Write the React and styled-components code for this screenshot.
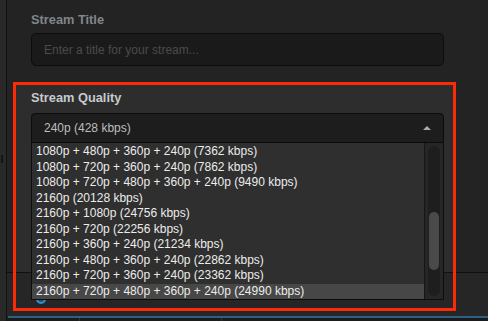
import React from "react";
import styled, { createGlobalStyle } from "styled-components";

const Global = createGlobalStyle`
  html, body { margin: 0; padding: 0; background: #232323; }
  body { font-family: "Liberation Sans", Arial, sans-serif; }
  * { box-sizing: border-box; }
`;

const Page = styled.div`
  position: relative;
  width: 488px;
  height: 321px;
  display: flex;
  background: #232323;
  overflow: hidden;
`;

const LeftStrip = styled.div`
  width: 7px;
  flex: none;
  background: #292929;
  border-right: 1px solid #121212;
  display: flex;
  flex-direction: column;
  padding-top: 155px;
`;

const Grip = styled.div`
  width: 2px;
  height: 8px;
  margin-left: 1px;
  background: #141414;
`;

const Main = styled.div`
  flex: 1;
  display: flex;
  flex-direction: column;
`;

const Upper = styled.div`
  height: 272px;
  display: flex;
  flex-direction: column;
`;

const Field = styled.div`
  display: flex;
  flex-direction: column;
  gap: ${(p) => p.$gap}px;
  padding: ${(p) => p.$pad};
`;

const Label = styled.div`
  font-size: 12.8px;
  line-height: 15px;
  font-weight: bold;
  color: ${(p) => (p.$active ? "#c6cacd" : "#80868b")};
`;

const TextInput = styled.input`
  height: 33px;
  width: 100%;
  background: #1a1a1a;
  border: 1px solid #0c0c0c;
  border-radius: 5px;
  padding: 0 12px;
  font-family: "Liberation Sans", Arial, sans-serif;
  font-size: 12px;
  color: #ccc;
  outline: none;
  &::placeholder { color: #4b4b4b; }
`;

const QualitySection = styled.div`
  flex: 1;
  margin: 19px 35px 0 9px;
  background: #2d2d2d;
  display: flex;
  flex-direction: column;
  gap: 8px;
  padding: 5px 9px 0 15px;
`;

const SelectWrap = styled.div`
  position: relative;
`;

const SelectHeader = styled.div`
  height: 30px;
  background: #1d1d1d;
  border: 1px solid #0b0b0b;
  border-radius: 4px 4px 0 0;
  display: flex;
  align-items: center;
  justify-content: space-between;
  padding: 0 12px 0 12px;
  font-size: 12px;
  color: #bdbdbd;
`;

const Arrow = styled.div`
  width: 0;
  height: 0;
  border-left: 4px solid transparent;
  border-right: 4px solid transparent;
  border-bottom: 4px solid #aaaaaa;
  margin-bottom: 1px;
`;

const Menu = styled.div`
  position: absolute;
  top: 30px;
  left: 0;
  right: 0;
  height: 157px;
  background: #2f2f2f;
  border: 1px solid #0d0d0d;
  border-top: none;
  display: flex;
  z-index: 2;
`;

const List = styled.div`
  flex: 1;
  display: flex;
  flex-direction: column;
  padding-top: 1px;
`;

const Item = styled.div`
  height: 15.55px;
  line-height: 15.55px;
  padding-left: 4px;
  font-size: 12px;
  color: #ececec;
  white-space: nowrap;
  background: ${(p) => (p.$selected ? "#474747" : "transparent")};
`;

const ScrollBar = styled.div`
  width: 19px;
  flex: none;
  background: #262626;
  border-left: 1px solid #161616;
  padding: 3px;
  display: flex;
`;

const Track = styled.div`
  flex: 1;
  background: #1e1e1e;
  border-radius: 6px;
  display: flex;
  flex-direction: column;
  padding: ${(p) => p.$top}px 1px 0 1px;
`;

const Thumb = styled.div`
  height: 58px;
  background: #4a4a4a;
  border-radius: 5px;
`;

const Lower = styled.div`
  flex: 1;
  background: #262626;
  border-top: 1px solid #111;
  padding: 21px 0 0 29px;
`;

const Radio = styled.div`
  width: 10px;
  height: 10px;
  border-radius: 50%;
  border: 2px solid #3a8dcc;
  background: #1d4e75;
`;

const BlueBar = styled.div`
  height: 2px;
  margin-left: 1px;
  background: #2c5f86;
`;

const Tabs = styled.div`
  height: 3px;
  background: #1b1b1b;
  display: flex;
`;

const Tab = styled.div`
  width: ${(p) => p.$w}px;
  flex: none;
  border-right: 1px solid #333;
`;

const Annotation = styled.div`
  position: absolute;
  left: 13px;
  top: 82px;
  width: 443px;
  height: 229px;
  border: 3px solid #fd2a08;
  pointer-events: none;
  z-index: 3;
`;

const options = [
  "1080p + 480p + 360p + 240p (7362 kbps)",
  "1080p + 720p + 360p + 240p (7862 kbps)",
  "1080p + 720p + 480p + 360p + 240p (9490 kbps)",
  "2160p (20128 kbps)",
  "2160p + 1080p (24756 kbps)",
  "2160p + 720p (22256 kbps)",
  "2160p + 360p + 240p (21234 kbps)",
  "2160p + 480p + 360p + 240p (22862 kbps)",
  "2160p + 720p + 360p + 240p (23362 kbps)",
  "2160p + 720p + 480p + 360p + 240p (24990 kbps)",
];

export default function App() {
  return (
    <>
      <Global />
      <Page>
        <LeftStrip>
          <Grip />
        </LeftStrip>
        <Main>
          <Upper>
            <Field $gap={6} $pad="12px 44px 0 24px">
              <Label>Stream Title</Label>
              <TextInput placeholder="Enter a title for your stream..." />
            </Field>
            <QualitySection>
              <Label $active>Stream Quality</Label>
              <SelectWrap>
                <SelectHeader>
                  <span>240p (428 kbps)</span>
                  <Arrow />
                </SelectHeader>
                <Menu>
                  <List>
                    {options.map((o, i) => (
                      <Item key={o} $selected={i === options.length - 1}>
                        {o}
                      </Item>
                    ))}
                  </List>
                  <ScrollBar>
                    <Track $top={66}>
                      <Thumb />
                    </Track>
                  </ScrollBar>
                </Menu>
              </SelectWrap>
            </QualitySection>
          </Upper>
          <Lower>
            <Radio />
          </Lower>
          <BlueBar />
          <Tabs>
            <Tab $w={73} />
            <Tab $w={142} />
          </Tabs>
        </Main>
        <Annotation />
      </Page>
    </>
  );
}
